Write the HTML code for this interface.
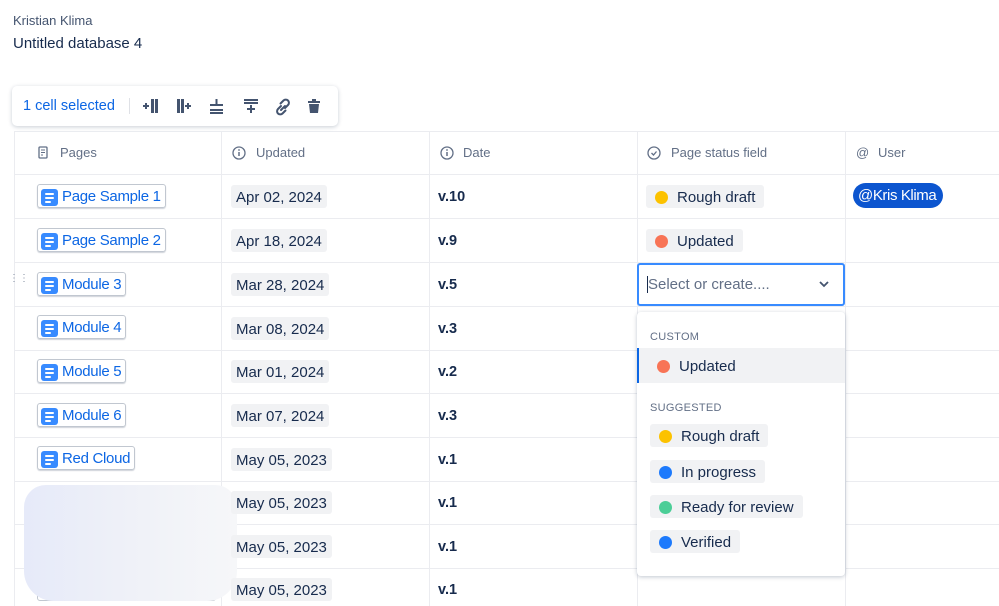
<!DOCTYPE html><html><head><style>
*{box-sizing:border-box;margin:0;padding:0}
body{width:999px;height:606px;overflow:hidden;background:#fff;font-family:"Liberation Sans",sans-serif;color:#172b4d;position:relative}
.a{position:absolute}
.vl{position:absolute;top:131px;bottom:0;width:1px;background:#ebecf0}
.hl{position:absolute;left:14px;right:0;height:1px;background:#ebecf0}
.hd{position:absolute;top:145px;font-size:13px;color:#626f86}
.pg{position:absolute;left:37px;height:24px;border:1px solid #c1c7d0;border-radius:3px;box-shadow:0 1px 1px rgba(9,30,66,.2);padding:2px 4px 0 3px;font-size:15px;letter-spacing:-0.3px;color:#0c66e4;display:flex;align-items:center;gap:4px;white-space:nowrap;line-height:18px}
.ic{width:17px;height:17px;background:#388bff;border-radius:3px;position:relative;flex:none}
.ic i{position:absolute;left:4px;height:2px;background:#fff;border-radius:1px}
.dt{position:absolute;left:231px;height:23px;background:#f1f2f4;border-radius:3px;padding:4px 5px 0;font-size:15px;color:#172b4d}
.v{position:absolute;left:438px;font-size:14.5px;font-weight:bold;color:#172b4d}
.st{position:absolute;height:23px;background:#f1f2f4;border-radius:3px;padding:2px 9px 0 9px;font-size:15px;display:flex;align-items:center;gap:9px}
.dot{width:13px;height:13px;border-radius:50%}
.lb{position:absolute;left:650px;font-size:11px;color:#626f86;letter-spacing:.3px}
</style></head><body>
<div class="a" style="left:13px;top:13px;font-size:13px;color:#44546f">Kristian Klima</div>
<div class="a" style="left:13px;top:35px;font-size:15px;color:#172b4d">Untitled database 4</div>

<div class="vl" style="left:14px"></div><div class="vl" style="left:221px"></div><div class="vl" style="left:429px"></div><div class="vl" style="left:637px"></div><div class="vl" style="left:845px"></div>
<div class="hl" style="top:131px"></div><div class="hl" style="top:174px"></div><div class="hl" style="top:218px"></div><div class="hl" style="top:262px"></div><div class="hl" style="top:306px"></div><div class="hl" style="top:350px"></div><div class="hl" style="top:393px"></div><div class="hl" style="top:437px"></div><div class="hl" style="top:481px"></div><div class="hl" style="top:524px"></div><div class="hl" style="top:568px"></div>

<div class="a" style="left:12px;top:86px;width:326px;height:40px;background:#fff;border-radius:5px;box-shadow:0 1px 4px rgba(9,30,66,.22)">
<div class="a" style="left:11px;top:12px;font-size:14.5px;color:#0c66e4">1 cell selected</div>
<div class="a" style="left:117px;top:12px;width:1px;height:16px;background:#dfe1e6"></div>
<svg class="a" style="left:130px;top:10px" width="200" height="20" fill="#44546f">
<rect x="1" y="9" width="6" height="2"/><rect x="3" y="7" width="2" height="6"/><rect x="9" y="3" width="3" height="14"/><rect x="13" y="3" width="3" height="14"/>
<rect x="35" y="3" width="3" height="14"/><rect x="39" y="3" width="3" height="14"/><rect x="43" y="9" width="6" height="2"/><rect x="45" y="7" width="2" height="6"/>
<rect x="68" y="13" width="13" height="2"/><rect x="68" y="16" width="13" height="2"/><rect x="68" y="8" width="13" height="2"/><rect x="73.5" y="3" width="2" height="6"/>
<rect x="102" y="3" width="14" height="2"/><rect x="102" y="6" width="14" height="2"/><rect x="108" y="9" width="2" height="8"/><rect x="105" y="12" width="8" height="2"/>
<path d="M139 10l-3 3a3 3 0 0 0 4.5 4.5l3-3M143 12l3-3a3 3 0 0 0-4.5-4.5l-3 3M139 14l4-4" stroke="#44546f" stroke-width="2" fill="none" stroke-linecap="round"/>
<path d="M166 5h12v2h-12zM170 3h4v2h-4zM167 8h10l-1 9h-8z"/>
</svg></div>

<svg class="a" style="left:38px;top:146px" width="10" height="13"><rect x="1" y="1" width="8" height="11" rx="1" fill="none" stroke="#626f86" stroke-width="1.3"/><path d="M3 4h4M3 6.5h4M3 9h2" stroke="#626f86"/></svg>
<div class="hd" style="left:60px">Pages</div>
<svg class="a" style="left:232px;top:146px" width="14" height="14"><circle cx="7" cy="7" r="6" fill="none" stroke="#626f86" stroke-width="1.3"/><path d="M7 6v4" stroke="#626f86" stroke-width="1.5"/><circle cx="7" cy="4" r=".9" fill="#626f86"/></svg>
<div class="hd" style="left:256px">Updated</div>
<svg class="a" style="left:440px;top:146px" width="14" height="14"><circle cx="7" cy="7" r="6" fill="none" stroke="#626f86" stroke-width="1.3"/><path d="M7 6v4" stroke="#626f86" stroke-width="1.5"/><circle cx="7" cy="4" r=".9" fill="#626f86"/></svg>
<div class="hd" style="left:463px">Date</div>
<svg class="a" style="left:647px;top:146px" width="14" height="14"><circle cx="7" cy="7" r="6" fill="none" stroke="#626f86" stroke-width="1.3"/><path d="M4.5 7l2 2 3-3.5" stroke="#626f86" stroke-width="1.3" fill="none"/></svg>
<div class="hd" style="left:671px">Page status field</div>
<div class="hd" style="left:856px">@</div><div class="hd" style="left:878px">User</div>

<div class="pg" style="top:184px"><div class="ic"><i style="top:4px;width:9px"></i><i style="top:8px;width:9px"></i><i style="top:12px;width:6px"></i></div>Page Sample 1</div>
<div class="pg" style="top:228px"><div class="ic"><i style="top:4px;width:9px"></i><i style="top:8px;width:9px"></i><i style="top:12px;width:6px"></i></div>Page Sample 2</div>
<div class="pg" style="top:272px"><div class="ic"><i style="top:4px;width:9px"></i><i style="top:8px;width:9px"></i><i style="top:12px;width:6px"></i></div>Module 3</div>
<div class="pg" style="top:315px"><div class="ic"><i style="top:4px;width:9px"></i><i style="top:8px;width:9px"></i><i style="top:12px;width:6px"></i></div>Module 4</div>
<div class="pg" style="top:359px"><div class="ic"><i style="top:4px;width:9px"></i><i style="top:8px;width:9px"></i><i style="top:12px;width:6px"></i></div>Module 5</div>
<div class="pg" style="top:403px"><div class="ic"><i style="top:4px;width:9px"></i><i style="top:8px;width:9px"></i><i style="top:12px;width:6px"></i></div>Module 6</div>
<div class="pg" style="top:446px"><div class="ic"><i style="top:4px;width:9px"></i><i style="top:8px;width:9px"></i><i style="top:12px;width:6px"></i></div>Red Cloud</div>
<div class="a" style="left:37px;top:577px;width:179px;height:24px;border:1px solid #c1c7d0;border-radius:3px"></div>
<div class="a" style="left:24px;top:485px;width:213px;height:116px;border-radius:22px 22px 30px 30px;background:linear-gradient(90deg,#e6eaf9,#eff1f8 50%,#f6f7f9);"></div>
<div class="a" style="left:9px;top:277px;font-size:10px;color:#8590a2;line-height:4px">⋮⋮</div>

<div class="dt" style="top:185px">Apr 02, 2024</div><div class="dt" style="top:229px">Apr 18, 2024</div><div class="dt" style="top:273px">Mar 28, 2024</div><div class="dt" style="top:317px">Mar 08, 2024</div><div class="dt" style="top:360px">Mar 01, 2024</div><div class="dt" style="top:404px">Mar 07, 2024</div><div class="dt" style="top:448px">May 05, 2023</div><div class="dt" style="top:491px">May 05, 2023</div><div class="dt" style="top:535px">May 05, 2023</div><div class="dt" style="top:578px">May 05, 2023</div>
<div class="v" style="top:189px">v.10</div><div class="v" style="top:233px">v.9</div><div class="v" style="top:277px">v.5</div><div class="v" style="top:321px">v.3</div><div class="v" style="top:364px">v.2</div><div class="v" style="top:408px">v.3</div><div class="v" style="top:452px">v.1</div><div class="v" style="top:495px">v.1</div><div class="v" style="top:539px">v.1</div><div class="v" style="top:582px">v.1</div>

<div class="st" style="left:646px;top:185px"><div class="dot" style="background:#fcc200"></div>Rough draft</div>
<div class="st" style="left:646px;top:229px"><div class="dot" style="background:#f87456"></div>Updated</div>
<div class="a" style="left:853px;top:183px;width:90px;height:25px;border-radius:13px;background:#0c55cf;color:#fff;font-size:15px;letter-spacing:-0.4px;padding:4px 0 0 5px;white-space:nowrap">@Kris Klima</div>

<div class="a" style="left:637px;top:263px;width:208px;height:43px;border:2px solid #388bff;border-radius:3px;background:#fff"></div>
<div class="a" style="left:647px;top:276px;width:1px;height:17px;background:#172b4d"></div>
<div class="a" style="left:648px;top:276px;font-size:15px;color:#626f86">Select or create....</div>
<svg class="a" style="left:818px;top:280px" width="12" height="8"><path d="M2 2l4 4 4-4" stroke="#44546f" stroke-width="1.8" fill="none"/></svg>

<div class="a" style="left:637px;top:312px;width:208px;height:264px;background:#fff;border-radius:4px;box-shadow:0 1px 4px rgba(9,30,66,.25)"></div>
<div class="lb" style="top:331px">CUSTOM</div>
<div class="a" style="left:637px;top:348px;width:208px;height:35px;background:#f1f2f4;border-left:2px solid #0c66e4"></div>
<div class="st" style="left:648px;top:354px;background:none"><div class="dot" style="background:#f87456"></div>Updated</div>
<div class="lb" style="top:402px">SUGGESTED</div>
<div class="st" style="left:650px;top:424px"><div class="dot" style="background:#fcc200"></div>Rough draft</div>
<div class="st" style="left:650px;top:460px"><div class="dot" style="background:#1d7afc"></div>In progress</div>
<div class="st" style="left:650px;top:495px"><div class="dot" style="background:#4bce97"></div>Ready for review</div>
<div class="st" style="left:650px;top:530px"><div class="dot" style="background:#1d7afc"></div>Verified</div>
</body></html>
